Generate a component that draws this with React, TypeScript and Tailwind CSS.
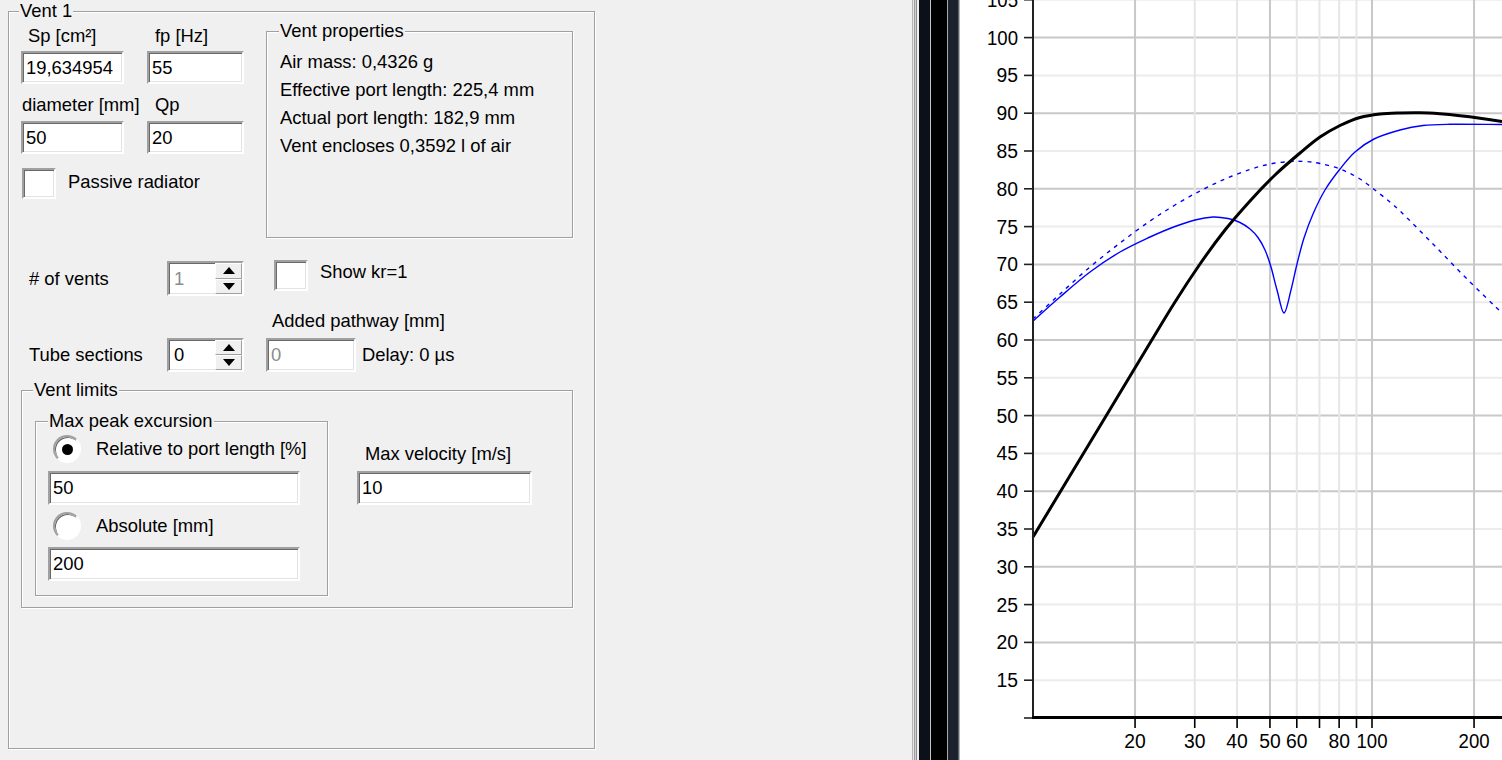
import React from "react";

type Pt = [number, number];

const sunken =
  "border-2 border-t-[#a0a0a0] border-l-[#a0a0a0] border-b-white border-r-white shadow-[inset_1px_1px_0_#696969,inset_-1px_-1px_0_#e3e3e3] bg-white";

function GroupBox({
  label,
  labelLeft,
  className,
  children,
}: {
  label: string;
  labelLeft: string;
  className: string;
  children?: React.ReactNode;
}) {
  return (
    <div
      className={`relative border border-[#a0a0a0] shadow-[1px_1px_0_#fff,inset_1px_1px_0_#fff] ${className}`}
    >
      <span
        className={`absolute -top-[11px] ${labelLeft} bg-[#f0f0f0] px-[1px] leading-[20px] whitespace-nowrap`}
      >
        {label}
      </span>
      {children}
    </div>
  );
}

function Edit({
  value,
  className,
  disabled = false,
}: {
  value: string;
  className: string;
  disabled?: boolean;
}) {
  return (
    <div className={`${sunken} flex items-center pl-[3px] ${className}`}>
      <span className={`leading-[20px] ${disabled ? "text-[#8c8c8c]" : ""}`}>{value}</span>
    </div>
  );
}

function Check({ className = "" }: { className?: string }) {
  return <div className={`${sunken} h-[31px] w-[34px] shrink-0 ${className}`} />;
}

function Radio({ checked = false }: { checked?: boolean }) {
  return (
    <div className="flex h-[28px] w-[28px] shrink-0 items-center justify-center rounded-full border-2 border-t-[#a0a0a0] border-l-[#a0a0a0] border-b-white border-r-white bg-white shadow-[inset_1px_1px_0_#696969]">
      {checked && <div className="h-[11px] w-[11px] rounded-full bg-black" />}
    </div>
  );
}

function SpinBtn({ up }: { up: boolean }) {
  return (
    <div className="flex flex-1 items-center justify-center border border-t-white border-l-white border-b-[#a0a0a0] border-r-[#a0a0a0] bg-[#f0f0f0]">
      <svg width="12" height="7" viewBox="0 0 12 7">
        {up ? <path d="M0 7 L6 0 L12 7 Z" fill="#000" /> : <path d="M0 0 L6 7 L12 0 Z" fill="#000" />}
      </svg>
    </div>
  );
}

function Spin({ value, disabled = false, className }: { value: string; disabled?: boolean; className: string }) {
  return (
    <div className={`${sunken} flex w-[77px] shrink-0 ${className}`}>
      <div className={`flex flex-1 items-center pl-[5px] leading-[20px] ${disabled ? "text-[#8c8c8c]" : ""}`}>
        {value}
      </div>
      <div className="flex w-[27px] flex-col">
        <SpinBtn up />
        <SpinBtn up={false} />
      </div>
    </div>
  );
}

// Catmull-Rom through the points, as cubic beziers
function smooth(pts: Pt[]) {
  let d = `M${pts[0][0]},${pts[0][1]}`;
  for (let i = 0; i < pts.length - 1; i++) {
    const p0 = pts[i - 1] || pts[i];
    const p1 = pts[i];
    const p2 = pts[i + 1];
    const p3 = pts[i + 2] || p2;
    const c1x = p1[0] + (p2[0] - p0[0]) / 6;
    const c1y = p1[1] + (p2[1] - p0[1]) / 6;
    const c2x = p2[0] - (p3[0] - p1[0]) / 6;
    const c2y = p2[1] - (p3[1] - p1[1]) / 6;
    d += ` C${c1x.toFixed(1)},${c1y.toFixed(1)} ${c2x.toFixed(1)},${c2y.toFixed(1)} ${p2[0]},${p2[1]}`;
  }
  return d;
}

const X0 = 1033;
const AXIS_Y = 718;
const fx = (f: number) => X0 + 339 * Math.log10(f / 10);
const fy = (db: number) => AXIS_Y - (db - 10) * 7.56;

const total: Pt[] = [
  [1033, 537], [1100, 426], [1150, 343], [1175, 302], [1200, 264], [1225, 230],
  [1250, 201], [1275, 175], [1300, 153], [1320, 137], [1340, 125.5], [1360, 117.5],
  [1380, 114], [1400, 113], [1420, 112.8], [1440, 113.8], [1460, 115.8],
  [1480, 118.3], [1502, 121.5],
];
const cone: Pt[] = [
  [1033, 321], [1060, 297], [1090, 272], [1120, 252], [1150, 237], [1175, 226.5],
  [1195, 220], [1213, 217], [1228, 218.5], [1240, 222.5], [1250, 229], [1258, 237.5],
  [1265, 250], [1271, 267], [1277, 290], [1284, 313], [1291, 290], [1297, 264],
  [1304, 238], [1313, 214], [1325, 190], [1340, 169], [1355, 152],
  [1374, 139], [1400, 130], [1423, 125.5], [1450, 124.3], [1502, 124.5],
];
const port: Pt[] = [
  [1033, 319], [1060, 294], [1090, 267], [1120, 243], [1150, 221], [1175, 205],
  [1200, 191], [1225, 179], [1250, 169.5], [1270, 164], [1290, 161.5], [1305, 161.5],
  [1320, 163.5], [1340, 169], [1360, 179], [1380, 194], [1400, 211], [1433, 244],
  [1467, 279], [1502, 313],
];

function Chart() {
  const dbs: number[] = [];
  for (let d = 15; d <= 105; d += 5) dbs.push(d);
  const freqs = [20, 30, 40, 50, 60, 70, 80, 90, 100, 200];
  const major = [20, 50, 100, 200];
  const labels = [20, 30, 40, 50, 60, 80, 100, 200];
  return (
    <svg width="542" height="760" viewBox="960 0 542 760" className="block">
      <rect x="960" y="0" width="542" height="760" fill="#fff" />
      {dbs.map((d) => (
        <line
          key={`h${d}`}
          x1={X0}
          x2={1502}
          y1={fy(d)}
          y2={fy(d)}
          stroke={d % 10 === 0 ? "#c8c8c8" : "#ececec"}
          strokeWidth="2"
        />
      ))}
      {freqs.map((f) => (
        <line
          key={`v${f}`}
          x1={fx(f)}
          x2={fx(f)}
          y1={0}
          y2={AXIS_Y}
          stroke={major.includes(f) ? "#c8c8c8" : "#e6e6e6"}
          strokeWidth="2"
        />
      ))}
      <path d={smooth(port)} fill="none" stroke="#0000ff" strokeWidth="1.4" strokeDasharray="4 5" />
      <path d={smooth(cone)} fill="none" stroke="#0000ff" strokeWidth="1.4" />
      <path d={smooth(total)} fill="none" stroke="#000" strokeWidth="3" />
      <line x1={X0} x2={X0} y1={0} y2={AXIS_Y} stroke="#222" strokeWidth="2" />
      {[10, ...dbs].map((d) => (
        <line key={`t${d}`} x1={1024} x2={X0} y1={fy(d)} y2={fy(d)} stroke="#222" strokeWidth="1.6" />
      ))}
      {dbs.map((d) => (
        <text
          key={`l${d}`}
          x={1018}
          y={fy(d) + 7}
          textAnchor="end"
          fontSize="20"
          fontFamily="'Liberation Sans', Arial, sans-serif"
          textLength={d >= 100 ? 31 : 21.5}
          lengthAdjust="spacingAndGlyphs"
          fill="#000"
        >
          {d}
        </text>
      ))}
      <line x1={X0 - 1} x2={1502} y1={AXIS_Y - 0.5} y2={AXIS_Y - 0.5} stroke="#000" strokeWidth="3" />
      {freqs.map((f) => (
        <line key={`xt${f}`} x1={fx(f)} x2={fx(f)} y1={719} y2={728} stroke="#000" strokeWidth="1.6" />
      ))}
      {labels.map((f) => (
        <text
          key={`xl${f}`}
          x={fx(f)}
          y={748}
          textAnchor="middle"
          fontSize="20"
          fontFamily="'Liberation Sans', Arial, sans-serif"
          textLength={f >= 100 ? 31 : 21.5}
          lengthAdjust="spacingAndGlyphs"
          fill="#000"
        >
          {f}
        </text>
      ))}
    </svg>
  );
}

function Divider() {
  const stripes: [string, string][] = [
    ["w-[1px]", "bg-[#b4b4b4]"],
    ["w-[1px]", "bg-[#e6e6e6]"],
    ["w-[1px]", "bg-[#a0a0a0]"],
    ["w-[1px]", "bg-[#cfcfcf]"],
    ["w-[1px]", "bg-[#8e8e8e]"],
    ["w-[2px]", "bg-[#f0f0f0]"],
    ["w-[11px]", "bg-[#0c1119]"],
    ["w-[1px]", "bg-[#c6c6c6]"],
    ["w-[16px]", "bg-black"],
    ["w-[1px]", "bg-[#a8a8a8]"],
    ["w-[10px]", "bg-[#1c232c]"],
    ["w-[1px]", "bg-[#5c636b]"],
    ["w-[1px]", "bg-[#b0b4b8]"],
  ];
  return (
    <div className="flex h-full w-[48px] shrink-0">
      {stripes.map(([w, c], i) => (
        <div key={i} className={`h-full ${w} ${c}`} />
      ))}
    </div>
  );
}

export default function App() {
  return (
    <div className="flex h-[760px] w-[1502px] overflow-hidden bg-[#f0f0f0] font-['Liberation_Sans',Arial,sans-serif] text-[18.4px] text-black">
      <div className="w-[912px] shrink-0 pl-[8px] pt-[11px]">
        <GroupBox label="Vent 1" labelLeft="left-[10px]" className="h-[738px] w-[587px]">
          <div className="pl-[12px] pt-[14px]">
            <div className="flex items-start">
              <div className="w-[223px] shrink-0">
                <div className="grid grid-cols-[126px_97px] leading-[20px]">
                  <span className="pl-[7px]">Sp [cm²]</span>
                  <span className="pl-[8px]">fp [Hz]</span>
                  <Edit value="19,634954" className="mt-[5px] h-[33px] w-[103px]" />
                  <Edit value="55" className="mt-[5px] h-[33px] w-[97px]" />
                  <span className="mt-[11px] pl-[1px]">diameter [mm]</span>
                  <span className="mt-[11px] pl-[8px]">Qp</span>
                  <Edit value="50" className="mt-[6px] h-[33px] w-[103px]" />
                  <Edit value="20" className="mt-[6px] h-[33px] w-[97px]" />
                </div>
                <div className="mt-[14px] flex items-start">
                  <Check className="ml-[1px]" />
                  <span className="ml-[12px] mt-[4px] leading-[20px]">Passive radiator</span>
                </div>
              </div>
              <GroupBox
                label="Vent properties"
                labelLeft="left-[12px]"
                className="ml-[22px] mt-[5px] h-[207px] w-[307px] shrink-0"
              >
                <div className="pl-[13px] pt-[16px] leading-[28px]">
                  <div>Air mass: 0,4326 g</div>
                  <div>Effective port length: 225,4 mm</div>
                  <div>Actual port length: 182,9 mm</div>
                  <div>Vent encloses 0,3592 l of air</div>
                </div>
              </GroupBox>
            </div>

            <div className="mt-[22px] flex items-start leading-[20px]">
              <span className="mt-[9px] w-[146px] shrink-0 pl-[8px]"># of vents</span>
              <Spin value="1" disabled className="mt-[1px] h-[35px]" />
              <Check className="ml-[30px]" />
              <span className="ml-[12px] mt-[2px]">Show kr=1</span>
            </div>
            <div className="ml-[251px] mt-[15px] leading-[20px]">Added pathway [mm]</div>
            <div className="mt-[7px] flex items-start leading-[20px]">
              <span className="mt-[7px] w-[146px] shrink-0 pl-[8px]">Tube sections</span>
              <Spin value="0" className="h-[34px]" />
              <Edit value="0" disabled className="ml-[22px] h-[34px] w-[90px] shrink-0" />
              <span className="ml-[6px] mt-[7px]">Delay: 0 µs</span>
            </div>

            <GroupBox label="Vent limits" labelLeft="left-[11px]" className="mt-[18px] h-[218px] w-[552px]">
              <div className="flex items-start">
                <GroupBox
                  label="Max peak excursion"
                  labelLeft="left-[12px]"
                  className="ml-[13px] mt-[30px] h-[175px] w-[293px] shrink-0"
                >
                  <div className="ml-[17px] mt-[13px] flex items-center">
                    <Radio checked />
                    <span className="ml-[15px] leading-[20px]">Relative to port length [%]</span>
                  </div>
                  <Edit value="50" className="ml-[12px] mt-[8px] h-[34px] w-[252px]" />
                  <div className="ml-[17px] mt-[7px] flex items-center">
                    <Radio />
                    <span className="ml-[15px] leading-[20px]">Absolute [mm]</span>
                  </div>
                  <Edit value="200" className="ml-[12px] mt-[7px] h-[34px] w-[252px]" />
                </GroupBox>
                <div className="ml-[29px]">
                  <div className="mt-[53px] pl-[8px] leading-[20px]">Max velocity [m/s]</div>
                  <Edit value="10" className="mt-[7px] h-[34px] w-[175px]" />
                </div>
              </div>
            </GroupBox>
          </div>
        </GroupBox>
      </div>
      <Divider />
      <div className="h-full flex-1 bg-white">
        <Chart />
      </div>
    </div>
  );
}
